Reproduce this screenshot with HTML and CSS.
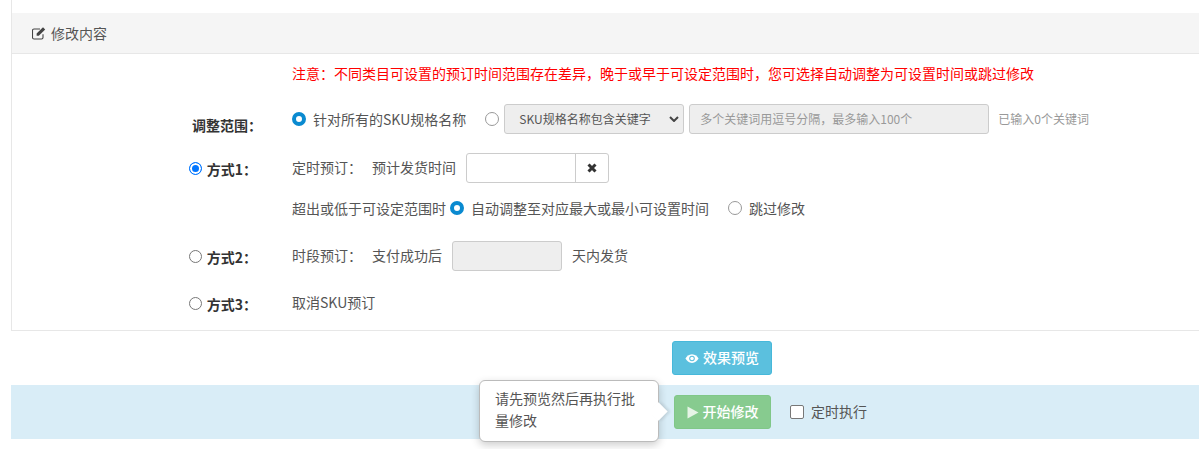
FILE: index.html
```html
<!DOCTYPE html>
<html lang="zh">
<head>
<meta charset="utf-8">
<title>修改内容</title>
<link rel="stylesheet" href="styles.css">
</head>
<body>
<div class="panel">
  <div class="panel-heading">
    <svg class="edit-icon" viewBox="0 0 14 14" width="14" height="14"><path d="M11 8.200V11.500a1.500 1.500 0 0 1-1.500 1.500H2a1.500 1.500 0 0 1-1.500-1.500V4.500A1.500 1.500 0 0 1 2 3H8" fill="none" stroke="#444" stroke-width="1.100"/><path d="M4.600 9.800V7.600L11 1.200l2.200 2.200L6.800 9.800z" fill="#444"/></svg>
    <span>修改内容</span>
  </div>
  <div class="panel-body">
    <div class="notice">注意：不同类目可设置的预订时间范围存在差异，晚于或早于可设定范围时，您可选择自动调整为可设置时间或跳过修改</div>

    <div class="row row-scope">
      <div class="label"><b class="label-scope">调整范围：</b></div>
      <div class="content">
        <span class="radio on"></span><span class="t gap-scope">针对所有的SKU规格名称</span>
        <span class="radio radio-tight"></span>
        <div class="select"><span>SKU规格名称包含关键字</span><svg viewBox="0 0 10 6" width="10" height="6"><path d="M1 1l4 4 4-4" fill="none" stroke="#444" stroke-width="2"/></svg></div>
        <div class="kw">多个关键词用逗号分隔，最多输入100个</div>
        <span class="hint">已输入0个关键词</span>
      </div>
    </div>

    <div class="row row-m1 raised">
      <div class="label"><span class="native on"></span><b class="label-low">方式1：</b></div>
      <div class="content">
        <span class="t gap-m">定时预订：</span><span class="t gap-input">预计发货时间</span>
        <div class="date"><div class="date-input"></div><div class="date-btn"><svg viewBox="0 0 10 10" width="10" height="10"><path d="M1.500 1.500l7 7M8.500 1.500l-7 7" stroke="#333" stroke-width="3"/></svg></div></div>
      </div>
    </div>

    <div class="row row-m1b">
      <div class="label"></div>
      <div class="content">
        <span class="t gap-over">超出或低于可设定范围时</span>
        <span class="radio on"></span><span class="t gap-auto">自动调整至对应最大或最小可设置时间</span>
        <span class="radio"></span><span class="t">跳过修改</span>
      </div>
    </div>

    <div class="row row-m2 raised">
      <div class="label"><span class="native"></span><b class="label-low">方式2：</b></div>
      <div class="content">
        <span class="t gap-m">时段预订：</span><span class="t gap-days">支付成功后</span>
        <div class="days"></div><span class="t">天内发货</span>
      </div>
    </div>

    <div class="row row-m3 raised">
      <div class="label"><span class="native"></span><b class="label-low">方式3：</b></div>
      <div class="content"><span class="t">取消SKU预订</span></div>
    </div>
  </div>
</div>

<div class="preview-row">
  <button class="btn btn-info"><svg viewBox="0 0 16 12" width="14" height="11"><path d="M8 1C4.500 1 1.800 3.500.5 6c1.300 2.500 4 5 7.500 5s6.200-2.500 7.500-5C14.200 3.500 11.500 1 8 1z" fill="#fff"/><circle cx="8" cy="6" r="3.200" fill="#5bc0de"/><circle cx="8" cy="6" r="2" fill="#fff"/></svg><span class="btn-text">效果预览</span></button>
</div>

<div class="action-bar">
  <div class="tooltip-wrap">
    <div class="tooltip">请先预览然后再执行批量修改</div>
  </div>
  <button class="btn btn-success"><svg viewBox="0 0 12 12" width="12" height="13"><path d="M.5 0v12L11.500 6z" fill="#e6f4e6"/></svg><span class="btn-text">开始修改</span></button>
  <span class="check"></span><span class="t bar-text">定时执行</span>
</div>
</body>
</html>
```

FILE: styles.css
```css
* { box-sizing: border-box; }
html, body { margin: 0; padding: 0; }
body {
  width: 1199px;
  height: 449px;
  overflow: hidden;
  background: #fff;
  color: #333;
  font: 14px/20px "Noto Sans CJK SC", "Liberation Sans", sans-serif;
  padding-left: 11px;
}
.panel {
  border-left: 1px solid #e7e7e7;
  border-bottom: 1px solid #e7e7e7;
  padding-top: 13px;
  height: 331px;
}
.panel-heading {
  height: 41px;
  background: #f5f5f5;
  border-bottom: 1px solid #e7e7e7;
  display: flex;
  align-items: center;
  padding-left: 20px;
  gap: 5px;
  color: #555;
}
.edit-icon { flex: none; }
.panel-body { display: flex; flex-direction: column; }
.notice {
  color: #f00;
  margin-left: 280px;
  height: 20px;
  margin-top: 9px;
  white-space: nowrap;
}
.row { display: flex; align-items: center; }
.label {
  width: 280px;
  flex: none;
  display: flex;
  justify-content: flex-end;
  align-items: center;
  padding-right: 30px;
  color: #333;
}
.label b { font-weight: 700; }
.label-low { margin-top: 2px; }
.label-scope { margin-top: 12px; }
.content { display: flex; align-items: center; color: #555; }
.t { white-space: nowrap; }
.raised .t { margin-bottom: 2px; }
.bar-text { margin-bottom: 2px; }
.btn-text { margin-bottom: 2px; }
.row-scope { margin-top: 21px; height: 30px; }
.row-m1 { margin-top: 19px; height: 30px; }
.row-m1b { margin-top: 10px; height: 30px; }
.row-m2 { margin-top: 18px; height: 30px; }
.row-m3 { margin-top: 17px; height: 30px; }
.row-m1 .label, .row-m2 .label, .row-m3 .label { gap: 5px; padding-right: 35px; }

.radio {
  width: 14px; height: 14px; border-radius: 50%;
  border: 1px solid #999; background: #fff; flex: none;
  margin-right: 7px;
}
.radio.on { border: 4px solid #0a8ad0; }
.radio-tight { margin-right: 5px; }
.native {
  width: 13px; height: 13px; border-radius: 50%;
  border: 1px solid #777; background: #fff; flex: none;
  margin-top: 1px;
}
.native.on { border: 1px solid #0075ff; box-shadow: inset 0 0 0 2px #fff; background: #0075ff; }
.gap-scope { margin-right: 19px; }
.select {
  width: 180px; height: 30px;
  border: 1px solid #ccc; border-radius: 3px; background: #eee;
  display: flex; align-items: center; justify-content: space-between;
  padding: 0 4px 0 14px;
  margin-right: 5px;
  color: #555;
  white-space: nowrap;
  font-size: 12px;
}
.kw {
  width: 300px; height: 30px;
  border: 1px solid #ccc; border-radius: 3px; background: #eee;
  display: flex; align-items: center;
  padding-left: 10px; color: #999;
  margin-right: 9px;
  font-size: 12px;
}
.hint { color: #999; font-size: 12px; }
.gap-m { margin-right: 10px; }
.gap-input { margin-right: 10px; }
.date { display: flex; height: 30px; width: 143px; border: 1px solid #ccc; border-radius: 3px; }
.date-input { width: 109px; border-right: 1px solid #ccc; }
.date-btn { flex: 1; display: flex; align-items: center; justify-content: center; }
.gap-over { margin-right: 4px; }
.gap-auto { margin-right: 19px; }
.gap-days { margin-right: 10px; }
.days { width: 110px; height: 30px; border: 1px solid #ccc; border-radius: 3px; background: #eee; margin-right: 10px; }

.preview-row { display: flex; padding-left: 661px; margin-top: 10px; height: 34px; }
.btn {
  height: 34px; border-radius: 3px; border: 1px solid;
  color: #fff; font: 500 14px/20px "Noto Sans CJK SC", "Liberation Sans", sans-serif;
  display: flex; align-items: center; justify-content: center; gap: 4px; padding: 0;
}
.btn-info { width: 100px; background: #5bc0de; border-color: #46b8da; }
.btn-success { width: 97px; background: #87cb8f; border-color: #80c788; margin-right: 19px; }
.action-bar {
  margin-top: 10px;
  height: 54px;
  background: #d9edf7;
  display: flex;
  align-items: center;
  padding-left: 663px;
  position: relative;
  color: #555;
}
.check { width: 14px; height: 14px; border: 1px solid #777; border-radius: 2px; background: #fff; margin-right: 7px; }
.tooltip-wrap { position: absolute; left: 468px; top: -5px; }
.tooltip {
  width: 180px; height: 62px; padding: 6px 15px;
  background: #fff; border: 1px solid #bbb; border-radius: 6px;
  box-shadow: 0 3px 9px rgba(0,0,0,.2);
  color: #555; line-height: 22px; position: relative;
}
.tooltip::after {
  content: ""; position: absolute; right: -7px; top: 24px;
  width: 13px; height: 13px; background: #fff; transform: rotate(45deg);
  box-shadow: 2px -2px 3px rgba(0,0,0,.1);
}
```
